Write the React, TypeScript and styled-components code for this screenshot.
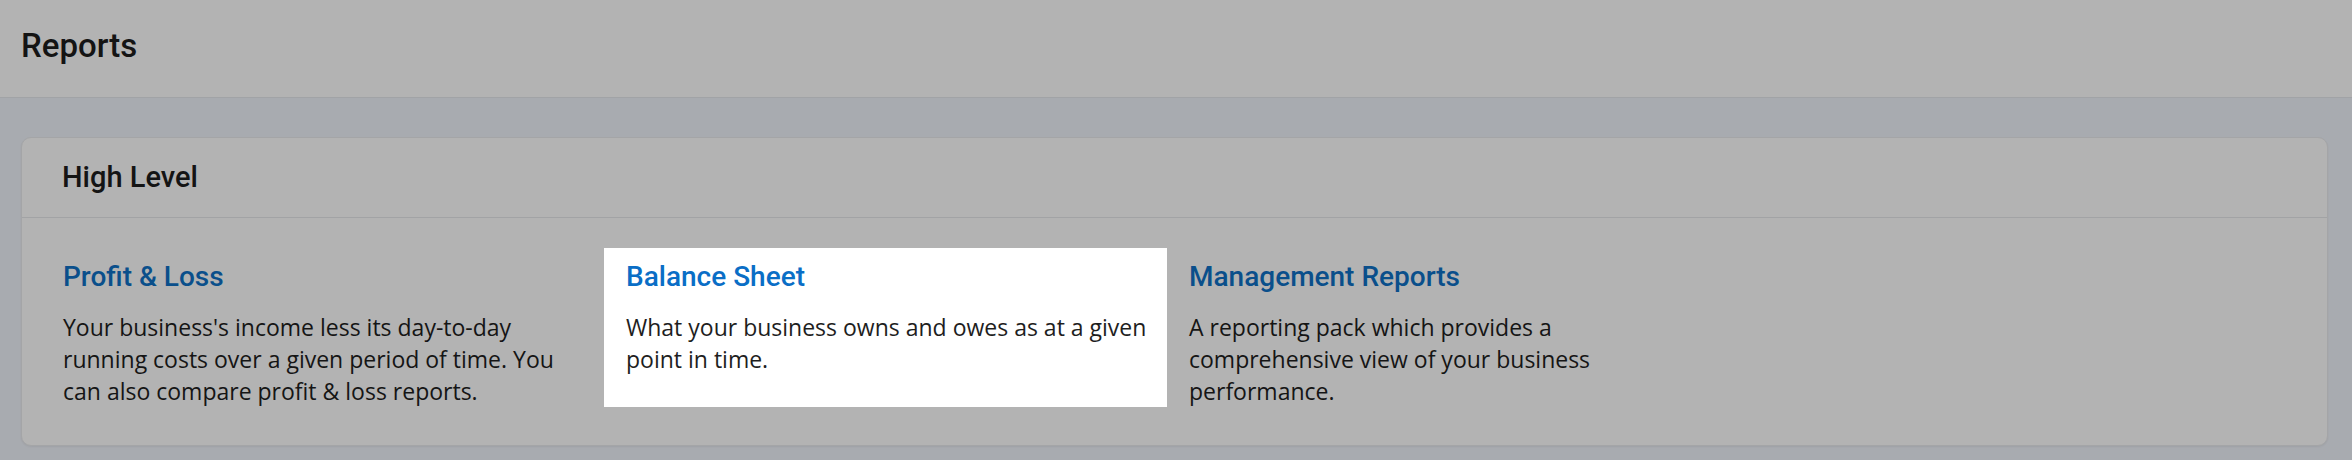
import styled, { createGlobalStyle } from 'styled-components';

const GlobalStyle = createGlobalStyle`
  html, body {
    margin: 0;
    padding: 0;
    background: #a8abb0;
    font-family: Roboto, "Liberation Sans", Arial, sans-serif;
  }
  * {
    box-sizing: border-box;
  }
`;

const Page = styled.div`
  width: 100vw;
  min-height: 460px;
  background: #a8abb0;
`;

const TopBar = styled.header`
  height: 98px;
  padding: 26px 21px 0;
  background: #b3b3b3;
  border-bottom: 1px solid #a1a3a6;
`;

const PageTitle = styled.h1`
  margin: 0;
  font-size: 33px;
  line-height: 40px;
  font-weight: 500;
  color: #141414;
`;

const Content = styled.main`
  padding: 39px 24px 0 21px;
`;

const Card = styled.section`
  background: #b3b3b3;
  border: 1px solid #a4a5a7;
  border-radius: 10px;
  box-shadow: 0 1px 2px rgba(0, 0, 0, 0.06);
`;

const CardHeader = styled.div`
  padding: 21px 40px 22px;
  border-bottom: 1px solid #a2a3a5;
`;

const CardTitle = styled.h2`
  margin: 0;
  font-size: 29px;
  line-height: 36px;
  font-weight: 500;
  color: #141414;
`;

const TileGrid = styled.div`
  display: grid;
  grid-template-columns: repeat(3, 563px);
  padding: 30px 0 38px 19px;
`;

const Tile = styled.a<{ $active?: boolean }>`
  display: block;
  padding: 12px 15px 0 22px;
  text-decoration: none;
  background: ${p => (p.$active ? '#ffffff' : 'transparent')};
`;

const TileTitle = styled.div<{ $active?: boolean }>`
  font-size: 28px;
  line-height: 34px;
  font-weight: 500;
  color: ${p => (p.$active ? '#0a6ec6' : '#0a4f8b')};
`;

const TileText = styled.p<{ $active?: boolean }>`
  margin: 17px 0 0;
  font-family: "Open Sans", "Noto Sans", Arial, sans-serif;
  font-size: 23px;
  line-height: 32px;
  font-weight: 400;
  color: ${p => (p.$active ? '#1e1e1e' : '#151515')};
`;

const reports = [
  {
    title: 'Profit & Loss',
    text: "Your business's income less its day-to-day running costs over a given period of time. You can also compare profit & loss reports.",
  },
  {
    title: 'Balance Sheet',
    text: 'What your business owns and owes as at a given point in time.',
    active: true,
  },
  {
    title: 'Management Reports',
    text: 'A reporting pack which provides a comprehensive view of your business performance.',
  },
];

function App() {
  return (
    <Page>
      <GlobalStyle />
      <TopBar>
        <PageTitle>Reports</PageTitle>
      </TopBar>
      <Content>
        <Card>
          <CardHeader>
            <CardTitle>High Level</CardTitle>
          </CardHeader>
          <TileGrid>
            {reports.map(r => (
              <Tile key={r.title} href="#" $active={r.active}>
                <TileTitle $active={r.active}>{r.title}</TileTitle>
                <TileText $active={r.active}>{r.text}</TileText>
              </Tile>
            ))}
          </TileGrid>
        </Card>
      </Content>
    </Page>
  );
}

export default App;
